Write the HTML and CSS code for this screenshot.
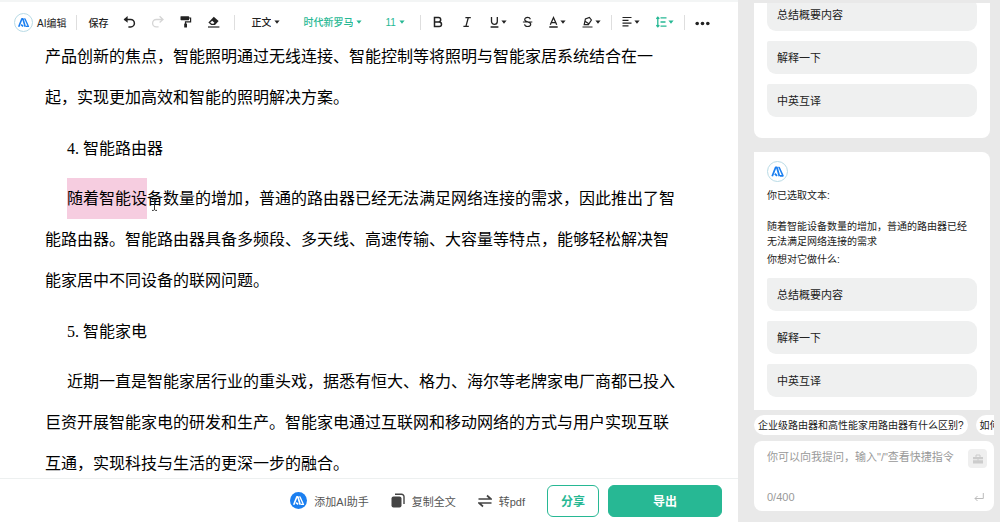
FILE: index.html
```html
<!DOCTYPE html>
<html lang="zh-CN">
<head>
    <meta charset="UTF-8">
    <meta name="viewport" content="width=device-width, initial-scale=1.0">
    <title>AI编辑</title>
    <link rel="stylesheet" href="styles.css">
</head>
<body>
    <!-- Shared shapes -->
    <svg class="sprite" aria-hidden="true">
        <symbol id="mark" viewBox="0 0 20 20">
            <path d="M4.400 15 8 5.800h1.400L12 15M7.200 12.400l2.400 2.200" fill="none" stroke="currentColor" stroke-width="1.900" stroke-linejoin="round"/>
            <path d="M10.800 5.800h1L15.800 14.600H12.600" fill="none" stroke="currentColor" stroke-width="1.600" stroke-linejoin="round"/>
        </symbol>
        <symbol id="caret" viewBox="0 0 6 4">
            <path d="M.4.5h5.2L3 3.7z" fill="currentColor"/>
        </symbol>
    </svg>

    <main class="editor">
        <div class="toolbar">
            <div class="brand">
                <svg class="logo logo-small"><use href="#mark"/></svg>
                <span>AI编辑</span>
            </div>
            <span class="divider"></span>

            <div class="group group-tools">
                <button class="tool tool-text">保存</button>
                <button class="tool" aria-label="撤销">
                    <svg width="13" height="14" viewBox="0 0 13 14"><path d="M1.500 4.500h6.200a3.600 3.600 0 0 1 0 7.400H5.400" fill="none" stroke="currentColor" stroke-width="1.500"/><path d="M4.600 1 .6 4.500l4 3.300z" fill="currentColor"/></svg>
                </button>
                <button class="tool disabled" aria-label="重做" disabled>
                    <svg width="13" height="14" viewBox="0 0 13 14"><path d="M11.500 4.500H5.300a3.600 3.600 0 0 0 0 7.400h2.300M8.600 1.200l3.400 3.300-3.400 3.100" fill="none" stroke="currentColor" stroke-width="1.300"/></svg>
                </button>
                <button class="tool" aria-label="格式刷">
                    <svg width="13" height="14" viewBox="0 0 13 14"><rect x="1.500" y="1.200" width="8.600" height="4" rx=".6" fill="currentColor"/><path d="M10 3h1.600v3.900H6.500v2" fill="none" stroke="currentColor" stroke-width="1.200"/><rect x="5.200" y="8.400" width="2.800" height="4.200" rx=".5" fill="currentColor"/></svg>
                </button>
                <button class="tool" aria-label="清除格式">
                    <svg width="13" height="14" viewBox="0 0 13 14"><path d="M6.800 1.800 11.600 6 8 10H4.200L1.400 7.600z" fill="currentColor"/><path d="m3.200 7.400 1.700 1.400h1.600l.9-1-2.200-2z" fill="#fff"/><path d="M1 12h11.400" stroke="currentColor" stroke-width="1.200"/></svg>
                </button>
            </div>
            <span class="divider"></span>

            <div class="group group-selects">
                <label class="picker">
                    <select aria-label="段落样式"><option>正文</option></select>
                    <svg class="caret"><use href="#caret"/></svg>
                </label>
                <label class="picker green">
                    <select aria-label="字体"><option>时代新罗马</option></select>
                    <svg class="caret"><use href="#caret"/></svg>
                </label>
                <label class="picker green">
                    <select aria-label="字号"><option>11</option></select>
                    <svg class="caret"><use href="#caret"/></svg>
                </label>
            </div>
            <span class="divider"></span>

            <div class="group group-format">
                <button class="tool" aria-label="加粗">
                    <svg width="14" height="14" viewBox="0 0 14 14"><path d="M3.500 2.500h4a2.200 2.200 0 0 1 0 4.400h-4zM3.500 6.900h4.700a2.300 2.300 0 0 1 0 4.600H3.500z" fill="none" stroke="currentColor" stroke-width="1.500"/></svg>
                </button>
                <button class="tool" aria-label="斜体">
                    <svg width="14" height="14" viewBox="0 0 14 14"><path d="M5.400 2.600h5.400M3.400 11.400h5.400M8.300 2.600l-2.400 8.800" fill="none" stroke="currentColor" stroke-width="1.300"/></svg>
                </button>
                <button class="tool" aria-label="下划线">
                    <svg width="11" height="14" viewBox="0 0 11 14"><path d="M2.500 2v4.400a2.900 2.900 0 0 0 5.800 0V2M1.600 12h7.800" fill="none" stroke="currentColor" stroke-width="1.300"/></svg>
                    <svg class="caret"><use href="#caret"/></svg>
                </button>
                <button class="tool" aria-label="删除线">
                    <svg width="11" height="14" viewBox="0 0 11 14"><path d="M8.400 4.200C8 3 7 2.400 5.600 2.400c-1.700 0-2.900.8-2.900 2.200 0 3.200 6 1.500 6 4.700 0 1.400-1.300 2.200-3 2.200S2.800 10.700 2.500 9.400M.9 7h9.400" fill="none" stroke="currentColor" stroke-width="1.200"/></svg>
                </button>
                <button class="tool" aria-label="字体颜色">
                    <svg width="11" height="14" viewBox="0 0 11 14"><path d="M2.300 9.800 5.500 2.500l3.200 7.300M3.500 7.600h4M1.300 12h8.400" fill="none" stroke="currentColor" stroke-width="1.300"/></svg>
                    <svg class="caret"><use href="#caret"/></svg>
                </button>
                <button class="tool" aria-label="突出显示">
                    <svg width="13" height="14" viewBox="0 0 13 14"><path d="M3.200 9.600 4.400 4l4-1.600 2 2.600L7.400 9.600zM4.400 6.400l3.400 2.400M1.500 12h10" fill="none" stroke="currentColor" stroke-width="1.200"/></svg>
                    <svg class="caret"><use href="#caret"/></svg>
                </button>
            </div>
            <span class="divider"></span>

            <div class="group group-align">
                <button class="tool" aria-label="对齐">
                    <svg width="11" height="14" viewBox="0 0 11 14"><path d="M.5 2.500h9M.5 5.300h6M.5 8.100h9M.5 10.900h6" stroke="currentColor" stroke-width="1.200"/></svg>
                    <svg class="caret"><use href="#caret"/></svg>
                </button>
                <button class="tool green" aria-label="行距">
                    <svg width="11" height="14" viewBox="0 0 11 14"><path d="M4.500 2.800h6M4.500 7h5M4.500 11.200h6M1.800 2.500v9M.3 3.800l1.500-1.600 1.500 1.600M.3 10.200l1.500 1.600 1.500-1.600" fill="none" stroke="currentColor" stroke-width="1.300"/></svg>
                    <svg class="caret"><use href="#caret"/></svg>
                </button>
            </div>
            <span class="divider"></span>

            <button class="tool" aria-label="更多">
                <svg width="15" height="14" viewBox="0 0 15 14" fill="currentColor"><circle cx="2.200" cy="8.500" r="1.800"/><circle cx="7.500" cy="8.500" r="1.800"/><circle cx="12.800" cy="8.500" r="1.800"/></svg>
            </button>
        </div>

        <article class="document">
            <p>产品创新的焦点，智能照明通过无线连接、智能控制等将照明与智能家居系统结合在一<br>起，实现更加高效和智能的照明解决方案。</p>
            <h2>4. 智能路由器</h2>
            <p class="indent"><mark>随着智能设<svg class="ibeam" width="7" height="12" viewBox="0 0 7 12"><path d="M1 .6h1.500l1 .8 1-.8H6M3.500 1.200v9.600M1 11.400h1.500l1-.8 1 .8H6" fill="none" stroke="#333"/></svg></mark>备数量的增加，普通的路由器已经无法满足网络连接的需求，因此推出了智<br>能路由器。智能路由器具备多频段、多天线、高速传输、大容量等特点，能够轻松解决智<br>能家居中不同设备的联网问题。</p>
            <h2>5. 智能家电</h2>
            <p class="indent">近期一直是智能家居行业的重头戏，据悉有恒大、格力、海尔等老牌家电厂商都已投入<br>巨资开展智能家电的研发和生产。智能家电通过互联网和移动网络的方式与用户实现互联<br>互通，实现科技与生活的更深一步的融合。</p>
        </article>

        <footer class="actions">
            <button class="action">
                <svg class="logo-solid"><use href="#mark"/></svg>
                添加AI助手
            </button>
            <button class="action">
                <svg width="14" height="15" viewBox="0 0 14 15"><rect x=".5" y="3.500" width="10" height="11" rx="2" fill="#444"/><path d="M4 1.200h6.500a2.500 2.500 0 0 1 2.500 2.500V11" fill="none" stroke="#444" stroke-width="1.400"/></svg>
                复制全文
            </button>
            <button class="action">
                <svg width="14" height="14" viewBox="0 0 14 14"><path d="M.5 5h12.400L9 1.500M13.500 9H1.100L5 12.500" fill="none" stroke="#444" stroke-width="1.700"/></svg>
                转pdf
            </button>
            <button class="btn btn-share">分享</button>
            <button class="btn btn-export">导出</button>
        </footer>
    </main>

    <aside class="assistant">
        <div class="messages">
            <section class="card card-previous">
                <div class="options">
                    <button class="option">总结概要内容</button>
                    <button class="option">解释一下</button>
                    <button class="option">中英互译</button>
                </div>
            </section>
            <section class="card card-current">
                <svg class="logo"><use href="#mark"/></svg>
                <p>你已选取文本:</p>
                <p class="quote">随着智能设备数量的增加，普通的路由器已经<br>无法满足网络连接的需求</p>
                <p class="ask">你想对它做什么:</p>
                <div class="options">
                    <button class="option">总结概要内容</button>
                    <button class="option">解释一下</button>
                    <button class="option">中英互译</button>
                </div>
            </section>
        </div>

        <div class="chips">
            <button class="chip">企业级路由器和高性能家用路由器有什么区别?</button>
            <button class="chip">如何</button>
        </div>

        <form class="composer">
            <div class="composer-row composer-main">
                <textarea aria-label="提问" placeholder='你可以向我提问，输入"/"查看快捷指令'></textarea>
                <button type="button" class="toolbox" aria-label="快捷指令">
                    <svg width="12" height="12" viewBox="0 0 12 12"><path d="M1 4h10v2.300H1zM1 7.300h10V10.500H1z" fill="#ccc"/><path d="M4 4V2h4v2M6 5.600v2.600" fill="none" stroke="#ccc"/></svg>
                </button>
            </div>
            <div class="composer-row">
                <span class="counter">0/400</span>
                <button class="send" aria-label="发送">
                    <svg width="10" height="10" viewBox="0 0 10 10"><path d="M9.300 1v5.500H1M3.500 4 1 6.500 3.500 9" fill="none" stroke="#bbb"/></svg>
                </button>
            </div>
        </form>
    </aside>
</body>
</html>
```

FILE: styles.css
```css
* {
    box-sizing: border-box;
}

body {
    display: flex;
    height: 100vh;
    margin: 0;
    overflow: hidden;
    font-family: "Liberation Sans", "Noto Sans CJK SC", sans-serif;
    color: #222;
    background: #fff;
}

button,
select,
textarea {
    margin: 0;
    padding: 0;
    border: none;
    background: none;
    font-family: inherit;
    color: inherit;
}

svg {
    display: block;
    flex-shrink: 0;
}

p,
h2 {
    margin: 0;
}

.sprite {
    position: absolute;
    width: 0;
    height: 0;
}

.caret {
    width: 6px;
    height: 4px;
}

.logo {
    width: 21px;
    height: 21px;
    border: 1px solid #b9dbe6;
    border-radius: 50%;
    color: #1b7ff0;
}

.logo-small {
    width: 19px;
    height: 19px;
}

/* Editor */
.editor {
    display: flex;
    flex: 1;
    flex-direction: column;
    min-width: 0;
}

.toolbar {
    display: flex;
    flex-shrink: 0;
    align-items: center;
    height: 42px;
    padding: 0 14px;
    border-top: 2px solid #f3f5f5;
    font-size: 10px;
    background: #fff;
}

.brand {
    display: flex;
    align-items: center;
    gap: 4px;
    white-space: nowrap;
}

.divider {
    width: 1px;
    height: 15px;
    margin: 0 10px;
    background: #dedede;
}

.group {
    display: flex;
    align-items: center;
}

.group-tools {
    gap: 15px;
    padding: 0 4px 0 1px;
}

.group-selects {
    gap: 23px;
    padding: 0 5px 0 6px;
}

.group-format {
    gap: 15px;
}

.group-align {
    gap: 16px;
}

.tool {
    display: flex;
    align-items: center;
    gap: 1px;
    font-size: 10px;
    color: #222;
}

.tool-text {
    font-weight: 500;
}

.disabled {
    color: #d5d5d5;
}

.green {
    color: #27b894;
}

.picker {
    display: flex;
    align-items: center;
    gap: 3px;
}

.picker select {
    appearance: none;
    font-size: 10px;
    font-weight: 500;
}

.document {
    flex: 1;
    min-height: 0;
    padding: 0 45px;
    overflow: hidden;
    font-family: "Liberation Serif", "Noto Sans CJK SC", serif;
    font-size: 16px;
    line-height: 41px;
    color: #000;
    white-space: nowrap;
}

.document p:first-child {
    margin-top: -6px;
}

.document h2 {
    margin: 10px 0 9px;
    font-size: 16px;
    font-weight: 400;
    text-indent: 22px;
}

.indent {
    text-indent: 22px;
}

.document mark {
    position: relative;
    padding: 12px 0;
    background: #f6cde0;
    color: inherit;
}

.ibeam {
    position: absolute;
    top: 21px;
    left: 100%;
    margin-left: 4px;
}

.actions {
    display: flex;
    flex-shrink: 0;
    align-items: center;
    justify-content: flex-end;
    height: 44px;
    padding: 0 16px;
    border-top: 1px solid #edf0f0;
}

.action {
    display: flex;
    align-items: center;
    gap: 7px;
    margin-right: 22px;
    font-size: 11px;
    color: #555;
    white-space: nowrap;
}

.logo-solid {
    width: 17px;
    height: 17px;
    border-radius: 50%;
    background: #1b7ff0;
    color: #fff;
}

.btn {
    height: 32px;
    border: 1px solid #27b894;
    border-radius: 6px;
    font-size: 12px;
    font-weight: 700;
}

.btn-share {
    width: 52px;
    margin-right: 9px;
    color: #27b894;
}

.btn-export {
    width: 114px;
    background: #27b894;
    color: #fff;
}

/* Assistant */
.assistant {
    display: flex;
    flex-direction: column;
    flex-shrink: 0;
    width: 262px;
    padding: 3px 6px 11px 16px;
    background: #e9e9e9;
}

.messages {
    display: flex;
    flex: 1;
    flex-direction: column;
    justify-content: flex-end;
    gap: 14px;
    min-height: 0;
    margin-right: 4px;
    overflow: hidden;
}

.card {
    flex-shrink: 0;
    padding: 9px 13px 13px;
    background: #fff;
    font-size: 10px;
    line-height: 15px;
}

.card-previous {
    padding-bottom: 21px;
    border-radius: 0 0 8px 8px;
}

.card-current {
    border-radius: 0 8px 0 0;
}

.card .logo {
    margin-bottom: 6px;
}

.quote {
    margin: 16px 0 3px;
    white-space: nowrap;
}

.ask {
    margin-bottom: 11px;
}

.options {
    display: flex;
    flex-direction: column;
    gap: 10px;
}

.option {
    height: 33px;
    padding: 0 10px 2px;
    border-radius: 2px 9px 9px 9px;
    background: #eff0f0;
    font-size: 11px;
    text-align: left;
}

.chips {
    display: flex;
    gap: 8px;
    margin: 5px 0 6px;
    overflow: hidden;
}

.chip {
    flex-shrink: 0;
    height: 20px;
    padding: 0 4px 2px;
    border-radius: 10px;
    background: #fff;
    font-size: 10px;
    white-space: nowrap;
}

.composer {
    display: flex;
    flex-direction: column;
    height: 70px;
    padding: 8px 7px 6px 13px;
    border-radius: 8px;
    background: #fff;
}

.composer-row {
    display: flex;
    align-items: center;
    justify-content: space-between;
}

.composer-main {
    flex: 1;
    align-items: flex-start;
}

.composer textarea {
    flex: 1;
    min-width: 0;
    height: 32px;
    outline: none;
    resize: none;
    overflow: hidden;
    font-size: 11px;
    line-height: 16px;
}

.composer textarea::placeholder {
    color: #999;
}

.toolbox {
    display: flex;
    align-items: center;
    justify-content: center;
    width: 19px;
    height: 19px;
    border-radius: 4px;
    background: #efefef;
}

.counter {
    font-size: 11px;
    line-height: 16px;
    color: #999;
}

.send {
    margin-right: 3px;
}
```
